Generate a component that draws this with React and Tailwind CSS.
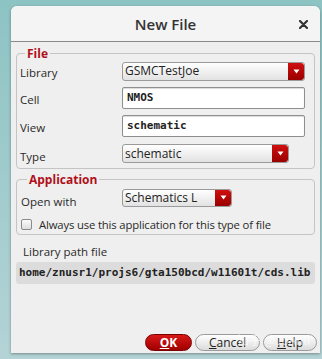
import { useState } from 'react';

const sans = { fontFamily: '"Open Sans", "DejaVu Sans", sans-serif' };

function Arrow() {
  return (
    <span className="flex h-full w-[16px] items-center justify-center rounded-r-[3px] bg-gradient-to-b from-[#d01010] to-[#9a0000]">
      <svg width="7" height="5" viewBox="0 0 7 5">
        <path d="M0.5 0.5 L6.5 0.5 L3.5 4.5 Z" fill="#fff" />
      </svg>
    </span>
  );
}

function Combo({ value, className }) {
  return (
    <div
      className={`flex items-center overflow-hidden rounded-[3px] border border-[#9a9a9a] bg-gradient-to-b from-white to-[#e2e2e2] text-[12px] text-[#222] ${className}`}
    >
      <span className="flex-1 whitespace-nowrap pl-[2px] leading-[16px]">{value}</span>
      <Arrow />
    </div>
  );
}

function TextBox({ value }) {
  return (
    <div className="flex h-[22px] w-[183px] items-center rounded-[2px] border border-[#8e8e8e] bg-white pl-[4px] font-['DejaVu_Sans_Mono',monospace] text-[11px] font-bold text-[#222] shadow-[inset_0_1px_1px_rgba(0,0,0,0.15)]">
      {value}
    </div>
  );
}

export default function App() {
  const [always, setAlways] = useState(false);

  return (
    <div className="h-[359px] w-[322px] bg-gradient-to-b from-[#8dc3c3] to-[#b4d3d6] pl-[11px] pr-[2px] pt-[6px]" style={sans}>
      <div className="relative flex h-[347px] w-[309px] flex-col overflow-hidden rounded-t-[6px] bg-[#efefef] shadow-[0_1px_3px_rgba(0,0,0,0.35)]">
        {/* title bar */}
        <div className="relative flex h-[36px] items-center justify-center border-b border-[#8a8a8a] bg-[#f4f4f4] pt-[2px]">
          <span className="text-[15px] font-semibold text-[#333]">New File</span>
          <svg className="absolute right-[12px] top-[14px]" width="9" height="9" viewBox="0 0 9 9">
            <path d="M1 1 L8 8 M8 1 L1 8" stroke="#333" strokeWidth="2.2" strokeLinecap="round" />
          </svg>
        </div>

        <div className="flex flex-1 flex-col px-[5px] pt-[5px] text-[11.5px] text-[#2a2a2a]">
          <fieldset className="rounded-[4px] border border-[#c4c4c4] px-[2px] pb-[2px]">
            <legend className="ml-[6px] px-[2px] text-[12px] font-bold leading-[13px] text-[#b0101a]">File</legend>
            <div className="grid grid-cols-[103px_1fr] items-center">
              <span className="pl-[1px] pt-[4px]">Library</span>
              <Combo value="GSMCTestJoe" className="mt-[1px] h-[19px] w-[183px]" />
              <span className="mt-[6px] pl-[1px] pt-[2px]">Cell</span>
              <div className="mt-[6px]"><TextBox value="NMOS" /></div>
              <span className="mt-[6px] pl-[1px] pt-[2px]">View</span>
              <div className="mt-[6px]"><TextBox value="schematic" /></div>
              <span className="mt-[5px] pl-[1px] pt-[6px]">Type</span>
              <Combo value="schematic" className="mt-[5px] h-[19px] w-[167px]" />
            </div>
          </fieldset>

          <fieldset className="mt-[4px] rounded-[4px] border border-[#c4c4c4] px-[4px] pb-[3px]">
            <legend className="ml-[6px] px-[2px] text-[12px] font-bold leading-[13px] text-[#b0101a]">Application</legend>
            <div className="flex items-center">
              <span className="w-[101px] pt-[7px]">Open with</span>
              <Combo value="Schematics L" className="h-[18px] w-[110px]" />
            </div>
            <label className="mt-[9px] flex items-center gap-[7px]">
              <input
                type="checkbox"
                checked={always}
                onChange={() => setAlways(!always)}
                className="h-[11px] w-[11px] appearance-none rounded-[2px] border border-[#8a8a8a] bg-gradient-to-b from-[#fafafa] to-[#dedede]"
              />
              <span className="text-[11.3px] leading-[12px] tracking-[-0.15px]">Always use this application for this type of file</span>
            </label>
          </fieldset>

          <div className="mt-[10px] pl-[7px] leading-[14px]">Library path file</div>
          <div className="mt-[3px] flex h-[22px] items-center rounded-[3px] bg-[#dcdcdc] pl-[3px] font-['DejaVu_Sans_Mono',monospace] text-[11px] font-bold text-[#222]">
            home/znusr1/projs6/gta150bcd/w11601t/cds.lib
          </div>

          <div className="-mr-[2px] mt-auto flex justify-end gap-[3px] pb-[2px]">
            <button className="h-[17px] w-[47px] rounded-full border border-[#7a0000] bg-gradient-to-b from-[#d81818] to-[#a00000] text-[12px] font-bold leading-[14px] text-white">
              <span className="underline">O</span>K
            </button>
            <button className="h-[17px] w-[65px] rounded-full border border-[#9a9a9a] bg-gradient-to-b from-white to-[#dcdcdc] text-[12px] leading-[14px] text-[#222]">
              <span className="underline">C</span>ancel
            </button>
            <button className="h-[17px] w-[54px] rounded-full border border-[#9a9a9a] bg-gradient-to-b from-white to-[#dcdcdc] text-[12px] leading-[14px] text-[#222]">
              <span className="underline">H</span>elp
            </button>
          </div>

          <span className="pointer-events-none absolute bottom-[6px] right-[10px] text-[12px] leading-[14px] text-white/60" style={{ fontFamily: '"Noto Sans CJK SC", sans-serif' }}>
            知乎 @JoAnli
          </span>
        </div>
      </div>
    </div>
  );
}
